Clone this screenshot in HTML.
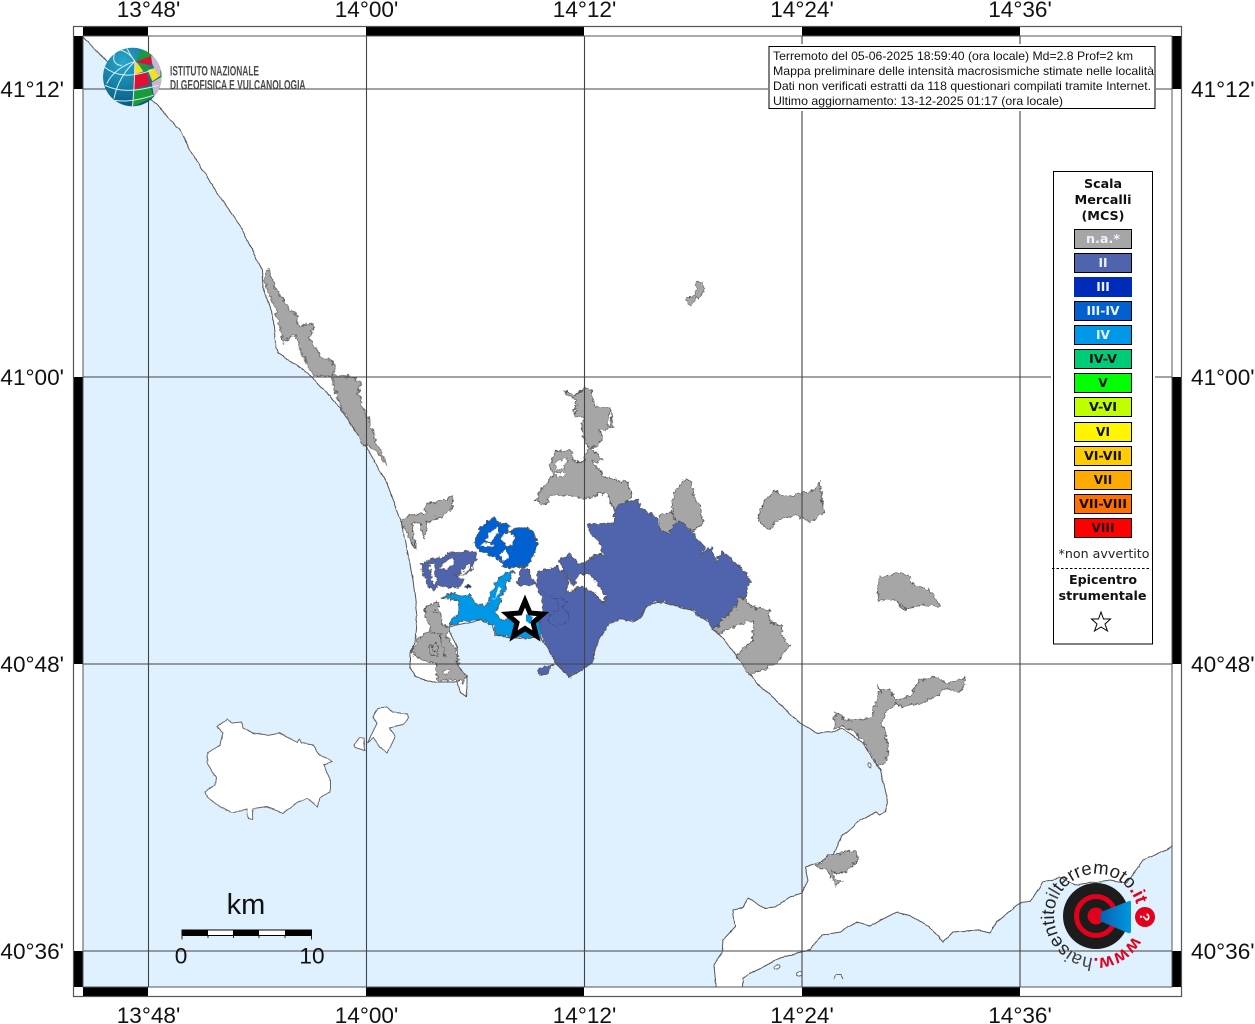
<!DOCTYPE html>
<html><head><meta charset="utf-8"><title>Mappa</title>
<style>html,body{margin:0;padding:0;background:#fff}svg{display:block}
.a{font-family:"Liberation Sans",sans-serif;font-size:22.6px;fill:#111}
.i{font-family:"Liberation Sans",sans-serif;font-size:11.6px;fill:#111}
.l{font-family:"DejaVu Sans",sans-serif;font-size:12.2px;font-weight:700;text-anchor:middle}
</style></head><body>
<svg xmlns="http://www.w3.org/2000/svg" width="1255" height="1024" viewBox="0 0 1255 1024">
<defs>
<radialGradient id="gb" cx="35%" cy="25%" r="85%"><stop offset="0" stop-color="#2aa8cc"/><stop offset=".55" stop-color="#12799f"/><stop offset="1" stop-color="#0a4f74"/></radialGradient>
<linearGradient id="cone" x1="0" x2="1" y1="0" y2="0"><stop offset="0" stop-color="#0b5fb0"/><stop offset="1" stop-color="#0098e0"/></linearGradient>
<clipPath id="sp"><circle cx="112" cy="105" r="88"/></clipPath>
<path id="arc" d="M1133 936 A42 42 0 1 1 1137.800 911"/>
<filter id="rough1" filterUnits="userSpaceOnUse" x="0" y="0" width="1255" height="1024" color-interpolation-filters="sRGB">
<feTurbulence type="fractalNoise" baseFrequency=".09" numOctaves="3" seed="4"/>
<feDisplacementMap in="SourceGraphic" scale="2.500" xChannelSelector="R" yChannelSelector="G"/>
</filter>
<filter id="rough2" filterUnits="userSpaceOnUse" x="0" y="0" width="1255" height="1024" color-interpolation-filters="sRGB">
<feTurbulence type="fractalNoise" baseFrequency=".22" numOctaves="3" seed="9"/>
<feDisplacementMap in="SourceGraphic" scale="6" xChannelSelector="R" yChannelSelector="G"/>
</filter>
</defs>
<rect width="1255" height="1024" fill="#fff"/>
<g filter="url(#rough1)">
<!-- sea -->
<g fill="#dff1fe" stroke="none">
<polygon points="83,36 105,60 130,80 160,108 180,130 190,150 215,190 240,225 252,250 262,270 263,287 273,317 276,348 278,353 297,365 312,377 340,408 366,447 387,483 400,520 402,523 413,580 417,613 415,643 410,653 410,667 415,677 433,682 457,682 460,693 466,697 467,687 467,677 458,667 457,647 448,628 457,625 480,620 492,625 495,635 513,638 540,638 548,648 557,665 570,677 592,663 597,643 608,625 620,618 633,622 640,617 648,605 657,602 663,602 680,607 690,610 708,622 712,628 727,643 747,670 757,683 783,707 800,723 817,733 832,732 843,728 863,743 880,770 888,803 885,812 880,815 876,812 860,820 843,835 833,855 820,862 805,867 808,880 802,893 790,897 775,907 765,908 748,898 743,908 733,910 735,927 723,940 722,953 714,965 717,995 60,995 60,36"/>
<polygon points="742,995 743,978 763,967 780,958 810,950 822,935 840,932 857,922 870,926 897,912 910,915 930,927 943,942 953,932 977,930 990,933 997,922 1020,903 1030,902 1043,882 1060,878 1075,885 1110,880 1127,883 1143,860 1167,850 1180,840 1180,995"/>
</g>
<g fill="none" stroke="#555" stroke-width="1">
<polyline points="83,36 105,60 130,80 160,108 180,130 190,150 215,190 240,225 252,250 262,270 263,287 273,317 276,348 278,353 297,365 312,377 340,408 366,447 387,483 400,520 402,523 413,580 417,613 415,643 410,653 410,667 415,677 433,682 457,682 460,693 466,697 467,687 467,677 458,667 457,647 448,628 457,625 480,620 492,625 495,635 513,638 540,638 548,648 557,665 570,677 592,663 597,643 608,625 620,618 633,622 640,617 648,605 657,602 663,602 680,607 690,610 708,622 712,628 727,643 747,670 757,683 783,707 800,723 817,733 832,732 843,728 863,743 880,770 888,803 885,812 880,815 876,812 860,820 843,835 833,855 820,862 805,867 808,880 802,893 790,897 775,907 765,908 748,898 743,908 733,910 735,927 723,940 722,953 714,965 717,995"/>
<polyline points="742,995 743,978 763,967 780,958 810,950 822,935 840,932 857,922 870,926 897,912 910,915 930,927 943,942 953,932 977,930 990,933 997,922 1020,903 1030,902 1043,882 1060,878 1075,885 1110,880 1127,883 1143,860 1167,850 1180,840"/>
</g>
<!-- islands -->
<g fill="#fff" stroke="#666" stroke-width="1">
<polygon points="217,727 227,719 232,723 242,722 243,728 253,733 267,735 279,733 290,738 297,742 300,739 302,743 313,745 320,755 332,762 324,765 330,778 330,792 320,797 318,807 307,798 297,803 283,813 267,807 253,809 252,820 248,819 247,809 232,813 220,807 207,797 205,792 215,785 216,777 207,763 208,753 220,745 223,733"/>
<polygon points="373,718 378,708 387,707 392,712 407,714 408,718 403,725 390,728 395,737 387,753 380,747 373,738 367,743 372,733 377,723"/>
<polygon points="354,745 360,737 364,738 365,751 355,748"/>
<ellipse cx="777" cy="967" rx="3" ry="2"/><ellipse cx="799" cy="974" rx="3" ry="2"/>
<path d="M834 980 L836 975 L841 975 L843 979" fill="none"/>
<ellipse cx="870" cy="765" rx="1.500" ry="2"/>
</g>
<g filter="url(#rough2)">
<!-- Naples area, zoom coordinates -->
<g transform="translate(400,380) scale(.33333)" stroke="#555" stroke-width="2.500" stroke-linejoin="round">
<g fill="#a6a6a6">
<polygon points="495,30 525,45 555,25 575,30 580,75 630,85 640,145 600,150 605,185 570,205 610,240 575,245 610,290 640,295 685,310 695,350 680,365 640,385 625,345 600,340 570,355 450,345 440,372 405,365 425,325 460,290 450,260 465,215 510,210 520,240 550,250 565,205 545,165 550,110 525,105 530,60 500,45"/>
<polygon points="815,400 825,330 860,300 875,305 880,340 900,380 910,430 880,455 845,427 830,432"/>
<polygon points="780,405 815,400 830,432 805,460 780,450"/>
<polygon points="935,745 965,715 1010,680 1015,655 1040,655 1050,680 1075,685 1110,690 1105,725 1145,735 1150,775 1170,795 1130,850 1110,860 1060,880 1045,885 1010,825 1035,800 1060,780 1060,720 1010,735 955,760"/>
<polygon points="5,425 30,405 75,400 80,365 105,370 160,350 155,385 125,410 80,425 75,480 60,430 35,430 45,510 30,480"/>
<polygon points="75,680 110,665 120,700 125,735 150,740 140,765 160,800 175,830 175,860 200,890 190,910 170,900 110,900 110,850 60,840 35,815 50,780 90,750 80,715"/>
</g>
<polygon fill="#fff" stroke="#555" stroke-width="1.500" points="470,240 505,235 495,262 465,278"/>
<polygon fill="#fff" stroke="#555" stroke-width="1.500" points="470,280 500,272 495,288 470,290"/>
<polygon fill="#fff" stroke="#555" stroke-width="2" points="625,100 632,100 632,140 622,135"/>
<polygon fill="#fff" stroke="#555" stroke-width="1.500" points="130,875 150,870 145,885 128,888"/>
<g fill="none" stroke="#444" stroke-width="2"><path d="M85,800 L110,790 L115,825 L90,825Z M95,805 L105,815 M120,760 L135,830 M100,690 L120,710 M90,760 L130,760"/></g>
<!-- II main -->
<g fill="#5064ae">
<polygon points="640,385 680,365 715,360 725,385 750,400 775,420 778,450 805,460 830,432 845,427 870,450 905,490 915,505 900,525 935,500 950,545 965,515 1005,545 1035,575 1055,605 1040,625 1040,655 1015,655 1010,675 965,715 955,740 935,745 925,725 870,690 840,680 790,665 770,665 745,675 720,710 700,725 660,715 625,735 590,790 575,850 510,890 470,855 445,805 425,770 410,740 430,700 425,650 408,625 415,575 470,560 495,575 505,610 500,640 540,620 570,630 610,665 618,650 600,625 575,585 540,580 520,620 500,590 480,540 510,520 530,550 555,550 590,520 610,525 600,490 570,460 565,435 610,430 645,430"/>
<polygon points="65,550 90,535 125,535 145,520 230,515 225,545 205,580 170,580 190,600 170,625 150,620 115,615 105,630 85,625 70,585"/>
<polygon points="360,560 385,570 395,600 410,610 370,618 350,610 360,590"/>
<polygon points="415,870 435,858 460,858 440,880 420,885"/>
</g>
<g fill="#fff" stroke="#555" stroke-width="2"><polygon points="90,552 105,545 100,570 110,610 100,612 92,580"/><polygon points="130,545 165,535 160,555 135,570 115,570"/><polygon points="165,590 205,555 215,550 200,575"/></g>
<path d="M430,640 L460,655 L500,660 L490,685 L505,700 L505,720 L470,742 L445,725 L445,705 L480,690 L470,665" fill="none" stroke="#3a4a8c" stroke-width="2"/>
<!-- III-IV -->
<polygon fill="#0060d0" points="220,490 240,445 280,410 300,430 330,435 320,460 360,440 395,450 415,490 400,530 380,560 330,565 310,560 300,540 280,530 240,510"/>
<polygon fill="#fff" stroke="#555" stroke-width="2" points="305,470 325,455 345,470 335,500 315,495"/>
<polygon fill="#fff" stroke="#555" stroke-width="1.500" points="250,480 290,440 295,455 270,485"/>
<polygon fill="#fff" stroke="#555" stroke-width="1.500" points="240,495 270,488 285,500 255,505"/>
<polygon fill="#fff" stroke="none" points="300,525 318,510 325,535 308,545"/>
<polygon fill="#002bb8" points="195,620 203,612 210,622 202,628"/>
<!-- IV -->
<polygon fill="#0098e6" points="125,655 160,640 175,650 210,645 225,670 260,675 285,610 300,590 330,570 340,575 310,640 290,690 285,700 310,720 340,700 420,700 420,772 350,775 290,765 280,735 250,720 195,720 150,740 155,715 175,700 175,660"/>
<polygon fill="#fff" stroke="none" points="284,660 300,640 305,625 296,622"/>
</g>
<!-- Litoral gray -->
<polygon transform="translate(240,250) scale(.33333)" fill="#a6a6a6" stroke="#555" stroke-width="2.500" stroke-linejoin="round" points="70,85 85,55 105,110 150,185 165,185 180,230 215,218 222,225 210,265 250,330 270,330 290,360 275,375 335,380 360,395 355,430 365,460 380,495 400,550 410,585 420,590 443,645 415,610 385,585 375,590 350,550 300,470 275,385 250,375 215,370 200,340 175,290 170,255 150,260 130,280 105,170 85,130"/>
<!-- south gray -->
<g transform="translate(700,660) scale(.33333)" fill="#a6a6a6" stroke="#555" stroke-width="2.500" stroke-linejoin="round">
<polygon points="400,210 405,160 425,165 430,175 460,182 510,175 515,165 545,90 530,75 545,85 570,90 590,120 630,110 655,65 700,50 745,70 790,55 795,70 780,100 735,85 720,105 660,130 610,140 590,130 560,150 545,190 555,215 565,280 550,315 530,318 490,240 450,205 420,200"/>
<polygon points="350,620 385,585 435,580 450,570 465,575 475,598 440,635 410,640 395,630 405,655 430,660 405,680 395,650 380,630"/>
</g>
<g fill="#a6a6a6" stroke="#555" stroke-width=".8" stroke-linejoin="round">
<polygon points="757,520 765,500 775,490 785,497 815,490 820,480 824,515 810,522 795,515 775,522 770,530"/>
<polygon points="684,300 695,295 696,283 703,282 705,292 698,298 690,306"/>
<polygon points="878,590 880,577 895,573 910,575 913,585 930,590 940,607 920,605 905,610 895,600 878,600"/>
</g>
</g>
</g>
<!-- outer band mask -->
<path fill-rule="evenodd" fill="#fff" d="M40 0H1215V1024H40Z M83 36V987H1172V36Z"/>
<!-- star epicentre -->
<polygon points="525,601 530,613 543,614 533,622.600 536.500,636 525,628.500 513.500,636 517,622.600 507,614 520,613" fill="#fff" stroke="#000" stroke-width="5" stroke-linejoin="miter"/>
<polygon points="526,614 533,617 530,624 526,621" fill="#0098e6"/>
<!-- grid -->
<g stroke="#444" stroke-width="1.100" fill="none">
<path d="M148.500 36V987M366.500 36V987M584.500 36V987M802 36V987M1020 36V987M83 89H1172M83 377H1172M83 664H1172M83 951H1172"/>
</g>
<!-- frame -->
<g fill="#000">
<rect x="83" y="27" width="65" height="9"/><rect x="366" y="27" width="218" height="9"/><rect x="802" y="27" width="218" height="9"/>
<rect x="83" y="987" width="65" height="9"/><rect x="366" y="987" width="218" height="9"/><rect x="802" y="987" width="218" height="9"/>
<rect x="74" y="36" width="9" height="53"/><rect x="74" y="377" width="9" height="287"/><rect x="74" y="951" width="9" height="36"/>
<rect x="1172" y="36" width="9" height="53"/><rect x="1172" y="377" width="9" height="287"/><rect x="1172" y="951" width="9" height="36"/>
</g>
<rect x="73.500" y="26.500" width="1108" height="970" fill="none" stroke="#555" stroke-width="1.200"/>
<rect x="83" y="36" width="1089" height="951" fill="none" stroke="#555" stroke-width="1"/>
<!-- axis labels -->
<g class="a" text-anchor="middle">
<text x="148.500" y="17">13°48'</text><text x="366.500" y="17">14°00'</text><text x="584.500" y="17">14°12'</text><text x="802" y="17">14°24'</text><text x="1020" y="17">14°36'</text>
<text x="148.500" y="1023">13°48'</text><text x="366.500" y="1023">14°00'</text><text x="584.500" y="1023">14°12'</text><text x="802" y="1023">14°24'</text><text x="1020" y="1023">14°36'</text>
</g>
<g class="a" text-anchor="end"><text x="64" y="97">41°12'</text><text x="64" y="385">41°00'</text><text x="64" y="672">40°48'</text><text x="64" y="959">40°36'</text></g>
<g class="a"><text x="1191" y="97">41°12'</text><text x="1191" y="385">41°00'</text><text x="1191" y="672">40°48'</text><text x="1191" y="959">40°36'</text></g>
<!-- INGV logo -->
<g transform="translate(95,42) scale(.33333)">
<g clip-path="url(#sp)">
<circle cx="112" cy="105" r="88" fill="url(#gb)"/>
<polygon points="120,58 145,20 175,40" fill="#1a9a3a"/>
<polygon points="122,60 168,42 170,70 140,64" fill="#e01030"/>
<polygon points="120,58 118,98 145,88 128,64" fill="#f5e020"/>
<polygon points="132,64 168,72 150,90 138,78" fill="#1a9a3a"/>
<polygon points="158,84 186,76 198,100 172,118" fill="#f5e020"/>
<polygon points="116,100 155,90 166,126 114,142" fill="#e01030"/>
<polygon points="114,146 166,132 176,165 112,195" fill="#1a9a3a"/>
<polygon points="168,40 200,60 202,95 188,100 172,66" fill="#c8b8cc"/>
<polygon points="170,122 200,104 200,150 178,170" fill="#c8b8cc"/>
<polygon points="196,85 202,85 202,105 196,105" fill="#1a9a3a"/>
<g fill="none" stroke="#d8eef4" stroke-width="3">
<path d="M120,58 C90,15 60,20 45,35M120,58 C105,40 100,25 95,18M120,58 C80,70 50,95 35,125 M120,58 C85,90 65,130 57,170M120,58 C118,100 118,150 112,195"/>
<path d="M60,30 C50,55 60,70 80,70 M28,75 C60,100 100,110 170,85M30,130 C70,150 120,150 190,130M60,175 C90,180 130,175 175,160"/>
</g>
</g>
</g>
<g font-family="'Liberation Sans',sans-serif" font-size="13.500" font-weight="700" fill="#4a4a4a">
<text x="170" y="75.500" textLength="89" lengthAdjust="spacingAndGlyphs">ISTITUTO NAZIONALE</text>
<text x="170" y="89.500" textLength="135.500" lengthAdjust="spacingAndGlyphs">DI GEOFISICA E VULCANOLOGIA</text>
</g>
<!-- info box -->
<rect x="768" y="44" width="388" height="67" fill="#fff"/>
<rect x="769" y="46.500" width="386" height="62" fill="#fff" stroke="#000" stroke-width="1"/>
<g class="i">
<text x="773" y="60" textLength="360" lengthAdjust="spacingAndGlyphs">Terremoto del 05-06-2025 18:59:40 (ora locale) Md=2.8 Prof=2 km</text>
<text x="773" y="75" textLength="381" lengthAdjust="spacingAndGlyphs">Mappa preliminare delle intensità macrosismiche stimate nelle località</text>
<text x="773" y="90" textLength="378" lengthAdjust="spacingAndGlyphs">Dati non verificati estratti da 118 questionari compilati tramite Internet.</text>
<text x="773" y="105" textLength="290" lengthAdjust="spacingAndGlyphs">Ultimo aggiornamento: 13-12-2025 01:17 (ora locale)</text>
</g>
<!-- legend -->
<rect x="1051" y="169" width="104" height="477" fill="#fff"/>
<rect x="1053.500" y="171.500" width="99" height="472.500" fill="#fff" stroke="#000" stroke-width="1"/>
<g class="l" fill="#111">
<text x="1103" y="188" textLength="38" lengthAdjust="spacingAndGlyphs">Scala</text>
<text x="1103" y="204" textLength="57" lengthAdjust="spacingAndGlyphs">Mercalli</text>
<text x="1103" y="220" textLength="43" lengthAdjust="spacingAndGlyphs">(MCS)</text>
</g>
<g stroke="#000" stroke-width="1">
<rect x="1074.500" y="229.500" width="57" height="19" fill="#a6a6a6"/>
<rect x="1074.500" y="253.500" width="57" height="19" fill="#5064ae"/>
<rect x="1074" y="277" width="58" height="20" fill="#002bb8" stroke="none"/>
<rect x="1074.500" y="301.500" width="57" height="19" fill="#0060d0"/>
<rect x="1074.500" y="325.500" width="57" height="19" fill="#0098e6"/>
<rect x="1074.500" y="349.500" width="57" height="19" fill="#00cc78"/>
<rect x="1074.500" y="373.500" width="57" height="19" fill="#00ff00"/>
<rect x="1074.500" y="397.500" width="57" height="19" fill="#bfff00"/>
<rect x="1074.500" y="422.500" width="57" height="19" fill="#fff500"/>
<rect x="1074.500" y="446.500" width="57" height="19" fill="#ffcc00"/>
<rect x="1074.500" y="470.500" width="57" height="19" fill="#ffaa00"/>
<rect x="1074.500" y="494.500" width="57" height="19" fill="#ff7000"/>
<rect x="1074.500" y="518.500" width="57" height="19" fill="#ff0000"/>
</g>
<g class="l" fill="#eef2ff">
<text x="1103" y="243" textLength="34" lengthAdjust="spacingAndGlyphs">n.a.*</text><text x="1103" y="267">II</text><text x="1103" y="291">III</text><text x="1103" y="315" textLength="33" lengthAdjust="spacingAndGlyphs">III-IV</text><text x="1103" y="339">IV</text>
</g>
<g class="l" fill="#111">
<text x="1103" y="363" textLength="28" lengthAdjust="spacingAndGlyphs">IV-V</text><text x="1103" y="387">V</text><text x="1103" y="411" textLength="28" lengthAdjust="spacingAndGlyphs">V-VI</text><text x="1103" y="436">VI</text><text x="1103" y="460" textLength="38" lengthAdjust="spacingAndGlyphs">VI-VII</text><text x="1103" y="484">VII</text><text x="1103" y="508" textLength="48" lengthAdjust="spacingAndGlyphs">VII-VIII</text><text x="1103" y="532">VIII</text>
</g>
<text x="1104" y="558" text-anchor="middle" font-family="'DejaVu Sans',sans-serif" font-size="12.500" fill="#222" textLength="91" lengthAdjust="spacingAndGlyphs">*non avvertito</text>
<line x1="1052" y1="568.500" x2="1151" y2="568.500" stroke="#000" stroke-width="1" stroke-dasharray="2.500 2"/>
<g class="l" fill="#111">
<text x="1103" y="584" textLength="68" lengthAdjust="spacingAndGlyphs">Epicentro</text>
<text x="1102.500" y="600" textLength="88" lengthAdjust="spacingAndGlyphs">strumentale</text>
</g>
<polygon points="1101,612 1103.500,619 1110.500,619 1105,624 1107.500,631 1101,627 1094.500,631 1097,624 1091.500,619 1098.500,619" fill="#fff" stroke="#000" stroke-width="1"/>
<!-- scale bar -->
<text x="246" y="914" text-anchor="middle" font-family="'Liberation Sans',sans-serif" font-size="29" fill="#111">km</text>
<rect x="182" y="930" width="129.500" height="5.500" fill="#fff" stroke="#000" stroke-width="1"/>
<rect x="182" y="930" width="26" height="5.500"/><rect x="233" y="930" width="26" height="5.500"/><rect x="285" y="930" width="26.500" height="5.500"/>
<path d="M182 935V939.500M208 935V938M233.500 935V938M259 935V938M285 935V938M311.500 935V939.500" stroke="#222" stroke-width="1" fill="none"/>
<text x="181" y="963.500" text-anchor="middle" class="a">0</text>
<text x="312" y="963.500" text-anchor="middle" class="a">10</text>
<!-- haisentito logo -->
<circle cx="1096" cy="916" r="33" fill="#1c1c1c"/>
<circle cx="1096" cy="916" r="19.500" fill="none" stroke="#e2001a" stroke-width="5"/>
<circle cx="1096" cy="916" r="8.500" fill="#e2001a"/>
<path d="M1101 912 L1129 901 Q1131 900 1131 903 L1131 931 Q1131 934 1128 933 L1100 921Z" fill="url(#cone)"/>
<circle cx="1145" cy="917" r="10" fill="#e2001a"/>
<text x="1145" y="922" text-anchor="middle" font-family="'Liberation Sans',sans-serif" font-weight="700" font-size="14" fill="#fff" transform="rotate(90 1145 917)">?</text>
<text font-family="'Liberation Sans',sans-serif" font-size="18.500" fill="#222"><textPath href="#arc"><tspan fill="#e2001a" font-weight="700">www.</tspan><tspan fill="#444">hai</tspan>sentito<tspan fill="#444">il</tspan>terremoto<tspan fill="#e2001a" font-weight="700">.it</tspan></textPath></text>
</svg>
</body></html>
